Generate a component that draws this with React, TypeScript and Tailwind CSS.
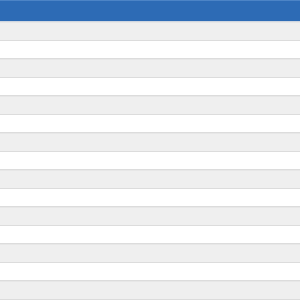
export default function App() {
  const rows = Array.from({ length: 16 }, (_, i) => i)
  return (
    <div className="w-[300px] h-[300px] overflow-hidden bg-white" style={{ fontFamily: '"Liberation Sans", Arial, sans-serif' }}>
      <div className="h-[22px] bg-[#2d6bb5] border-t border-[#4c84c6] border-b border-b-[#cfd6e0]" />
      {rows.map((i) => (
        <div
          key={i}
          className={`h-[18.5px] border-b border-[#dcdcdc] ${
            i % 2 === 0 ? 'bg-[#efefef] border-t border-t-[#e7e7e7]' : 'bg-white'
          }`}
        />
      ))}
    </div>
  )
}
